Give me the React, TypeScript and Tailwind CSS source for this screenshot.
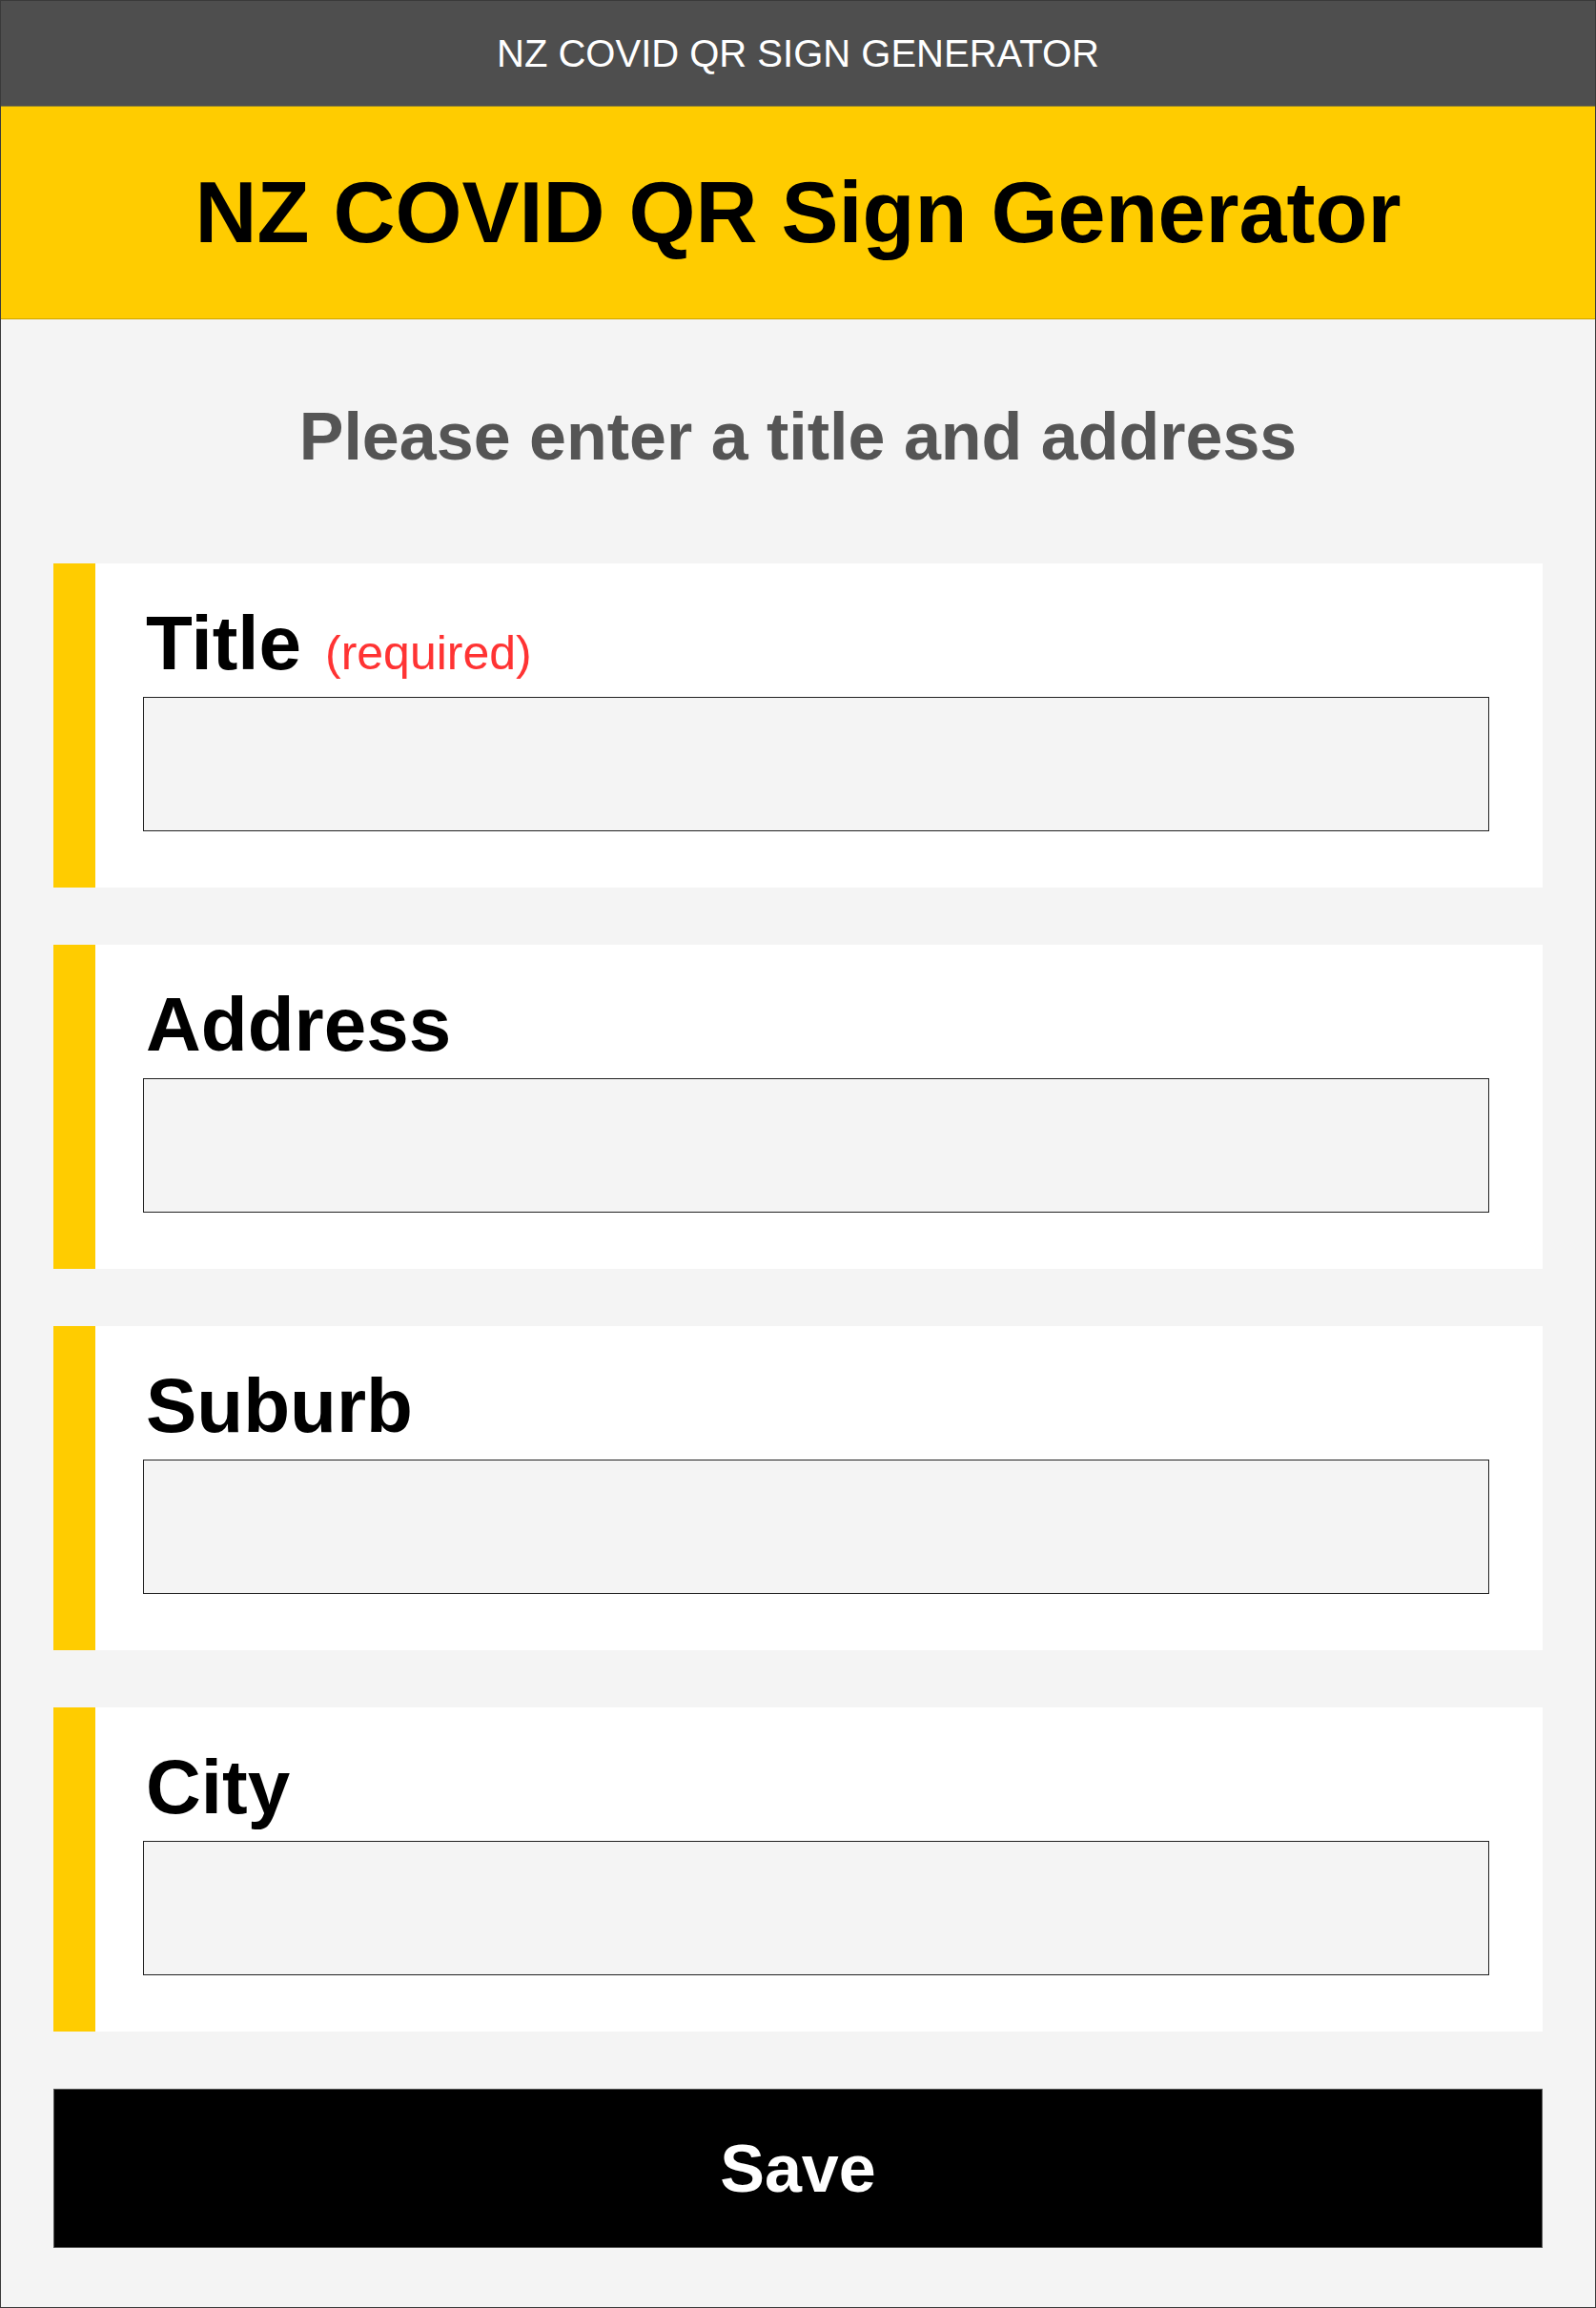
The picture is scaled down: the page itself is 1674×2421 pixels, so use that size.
import { useState } from "react";

const fields = [
  { key: "title", label: "Title", required: true },
  { key: "address", label: "Address", required: false },
  { key: "suburb", label: "Suburb", required: false },
  { key: "city", label: "City", required: false },
];

export default function App() {
  const [values, setValues] = useState<Record<string, string>>({});

  return (
    <div
      className="w-[1674px] h-[2421px] border border-[#3a3a3a] bg-[#f4f4f4] flex flex-col"
      style={{ fontFamily: '"Liberation Sans", Arial, sans-serif' }}
    >
      {/* top bar */}
      <div className="h-[111px] shrink-0 bg-[#4e4e4e] border-b border-[#9c8a2a] flex items-center justify-center">
        <span className="text-white text-[40px] leading-none">NZ COVID QR SIGN GENERATOR</span>
      </div>

      {/* yellow header */}
      <div className="h-[223px] shrink-0 bg-[#ffcc00] border-b border-[#cfa600] flex items-center justify-center">
        <h1 className="text-black font-bold text-[90px] leading-none">NZ COVID QR Sign Generator</h1>
      </div>

      <div className="flex-1 px-[55px] pt-[88px] flex flex-col">
        <h2 className="text-center text-[#555555] font-bold text-[70px] leading-none">
          Please enter a title and address
        </h2>

        <div className="mt-[98px] flex flex-col gap-[60px]">
          {fields.map((f) => (
            <div key={f.key} className="h-[340px] bg-white flex">
              <div className="w-[44px] shrink-0 bg-[#ffcc00]" />
              <div className="flex-1 pl-[50px] pr-[56px] pt-[44px] flex flex-col">
                <label className="h-[80px] pl-[3px] flex items-baseline leading-none">
                  <span className="text-black font-bold text-[80px] leading-none">{f.label}</span>
                  {f.required && (
                    <span className="ml-[25px] text-[#ff3333] text-[50px] leading-none">(required)</span>
                  )}
                </label>
                <input
                  type="text"
                  value={values[f.key] || ""}
                  onChange={(e) => setValues({ ...values, [f.key]: e.target.value })}
                  className="mt-[16px] h-[141px] w-full border border-[#222222] bg-[#f4f4f4] px-4 text-[48px] outline-none"
                />
              </div>
            </div>
          ))}
        </div>

        <button className="mt-[60px] h-[167px] w-full bg-black border border-[#555555] text-white font-bold text-[70px] leading-none">
          Save
        </button>
      </div>
    </div>
  );
}
